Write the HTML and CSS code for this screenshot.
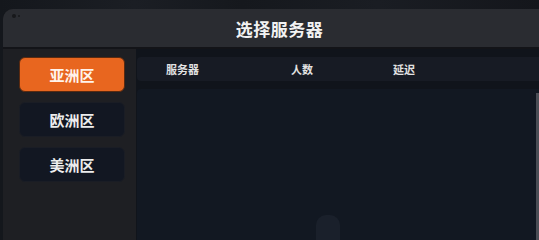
FILE: index.html
```html
<!DOCTYPE html>
<html lang="zh">
<head>
<meta charset="utf-8">
<title>选择服务器</title>
<link rel="stylesheet" href="styles.css">
</head>
<body>
<div class="stage">
  <div class="modal">
    <div class="modal-header">
      <span class="dots"><i class="dot big"></i><i class="dot small"></i></span>
      <h1 class="title">选择服务器</h1>
    </div>
    <div class="modal-body">
      <aside class="sidebar">
        <button class="region active">亚洲区</button>
        <button class="region">欧洲区</button>
        <button class="region">美洲区</button>
      </aside>
      <section class="content">
        <div class="table-head">
          <span class="col col-name">服务器</span>
          <span class="col col-count">人数</span>
          <span class="col col-ping">延迟</span>
        </div>
        <div class="table-body">
          <div class="scroll-thumb"></div>
          <div class="ghost"></div>
        </div>
      </section>
    </div>
  </div>
</div>
</body>
</html>
```
FILE: styles.css
```css
html, body {
  margin: 0;
  padding: 0;
  width: 539px;
  height: 240px;
  overflow: hidden;
  background: #121419;
  font-family: "Noto Sans CJK SC", "Noto Sans", sans-serif;
}

.stage {
  width: 539px;
  height: 240px;
  overflow: hidden;
  padding: 9px 0 0 3px;
  background: linear-gradient(90deg, #14171c 0%, #1b1e24 25%, #15181d 45%, #1a1d23 70%, #14161b 100%);
  box-sizing: border-box;
}

.modal {
  width: 600px;
  height: 240px;
  background: #1e1f23;
  border-radius: 10px 0 0 0;
  display: flex;
  flex-direction: column;
  overflow: hidden;
}

.modal-header {
  position: relative;
  height: 38px;
  background: #2a2c31;
  border-bottom: 2px solid #131418;
  display: flex;
  align-items: center;
  justify-content: center;
  padding-right: 44px;
  flex-shrink: 0;
}

.dots {
  position: absolute;
  left: 9px;
  top: 5px;
  display: flex;
  gap: 2px;
  align-items: center;
}

.dot {
  display: block;
  border-radius: 50%;
  background: #17181b;
}
.dot.big { width: 4px; height: 4px; }
.dot.small { width: 2px; height: 2px; }

.title {
  margin: 0;
  font-size: 17px;
  font-weight: 700;
  color: #f2f2f2;
  letter-spacing: 0.5px;
  padding-right: 3px;
}

.modal-body {
  flex: 1;
  display: flex;
}

.sidebar {
  width: 133px;
  flex-shrink: 0;
  box-sizing: border-box;
  padding: 8px 0 0 16px;
  display: flex;
  flex-direction: column;
  gap: 10px;
  background: #1e1f23;
}

.region {
  width: 106px;
  height: 35px;
  border: 1px solid #1a1d25;
  border-radius: 6px;
  background: #121722;
  color: #ececec;
  font-family: inherit;
  font-size: 15px;
  font-weight: 700;
  padding: 0;
  cursor: pointer;
}

.region.active {
  background: #e8661f;
  border-color: #5a2a10;
  color: #fff4ec;
}

.content {
  flex: 1;
  background: #10141b;
  padding: 8px 0 0 1px;
  display: flex;
  flex-direction: column;
  gap: 8px;
}

.table-head {
  height: 24px;
  background: #171b24;
  border-radius: 4px 0 0 4px;
  display: grid;
  grid-template-columns: 125px 102px 1fr;
  align-items: center;
  padding-left: 29px;
}

.col {
  font-size: 11px;
  font-weight: 700;
  color: #e2e2e2;
}

.table-body {
  position: relative;
  flex: 1;
  background: #121822;
  border-radius: 4px 0 0 0;
}

.scroll-thumb {
  position: absolute;
  left: 399px;
  top: 4px;
  width: 3px;
  height: 160px;
  background: #4b4e56;
}

.ghost {
  position: absolute;
  left: 179px;
  top: 126px;
  width: 24px;
  height: 30px;
  border-radius: 10px 10px 4px 4px;
  background: #1a202b;
}
```
